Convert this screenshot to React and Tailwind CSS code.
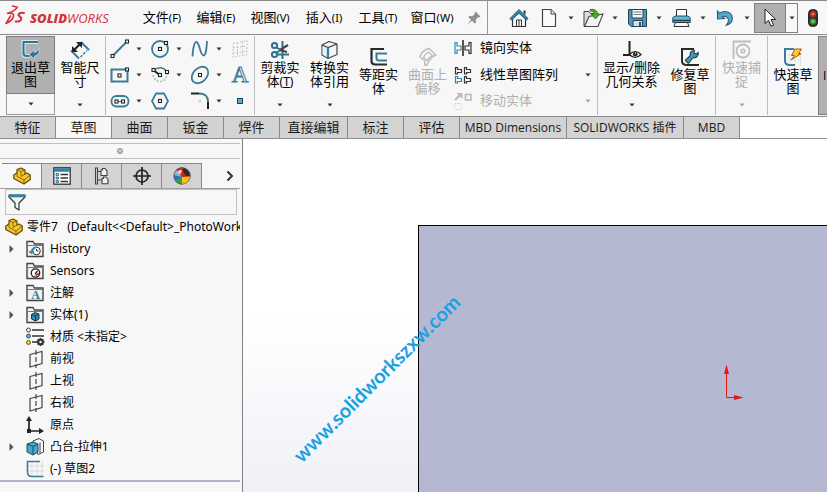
import { clsx } from 'clsx';

const menus = [
    { label: '文件', hotkey: 'F' },
    { label: '编辑', hotkey: 'E' },
    { label: '视图', hotkey: 'V' },
    { label: '插入', hotkey: 'I' },
    { label: '工具', hotkey: 'T' },
    { label: '窗口', hotkey: 'W' },
];

const commandTabs = [
    { label: '特征', width: 'w-14' },
    { label: '草图', width: 'w-14', active: true },
    { label: '曲面', width: 'w-14' },
    { label: '钣金', width: 'w-14' },
    { label: '焊件', width: 'w-14' },
    { label: '直接编辑', width: 'w-[68px]' },
    { label: '标注', width: 'w-14' },
    { label: '评估', width: 'w-14' },
    { label: 'MBD Dimensions', width: 'w-[107px]', latin: true },
    { label: 'SOLIDWORKS 插件', width: 'w-[117px]', latin: true },
    { label: 'MBD', width: 'w-14', latin: true },
];

const Svg = ({ w = 20, h = 20, children, className }) => (
    <svg width={w} height={h} viewBox={`0 0 ${w} ${h}`} fill="none" aria-hidden="true" className={clsx('shrink-0', className)}>
        {children}
    </svg>
);

const Caret = ({ muted }) => (
    <Svg w={6} h={4}>
        <path d="M0.5 0.5h5L3 3.5z" fill={muted ? '#a0a0a0' : '#333'} />
    </Svg>
);

// Small square handle used on most sketch entity icons
const Handle = ({ x, y }) => (
    <rect x={x - 1.5} y={y - 1.5} width="3" height="3" fill="#fff" stroke="#222" strokeWidth="1.1" />
);

/* ---------- Title bar icons ---------- */

const Logo = () => (
    <svg width="112" height="22" viewBox="0 0 112 22" role="img" aria-label="SOLIDWORKS" className="shrink-0">
        <g fill="none" stroke="#d2343a" strokeWidth="1.6" strokeLinecap="round" strokeLinejoin="round">
            <path d="M8.500 1L13.500 2.200Q11.500 5.500 5 8" />
            <path d="M3.500 8.200Q9.800 7.500 9.600 11Q8.500 16 2 18.500L6.500 11" />
            <path d="M20 8Q14 7.300 14.500 10.300L17.200 12.800Q17.800 17 11.500 16.500" strokeWidth="2" />
        </g>
        <text x="26" y="18" fill="#d2343a" fontFamily="'Open Sans', sans-serif" fontSize="13" fontStyle="italic">
            <tspan fontWeight="800">SOLID</tspan>
            <tspan fontWeight="400">WORKS</tspan>
        </text>
    </svg>
);

const PinIcon = () => (
    <Svg w={14} h={14}>
        <path d="M8.500 .5l5 5-1.200 1-1-.4-2.600 2.600.4 2.800-1.400 1-2.700-2.800L.5 13.500 4 8.800 1.400 6.200l1-1.300 2.900.4L8 2.700l-.4-1z" fill="#909090" />
    </Svg>
);

const HomeIcon = () => (
    <Svg w={20} h={20}>
        <path d="M3.500 10v8.500h13V10L10 4z" fill="#f8f8f8" stroke="#333" strokeWidth="1.200" />
        <path d="M7.500 18.500V12h5v6.500M10 12v6.500" stroke="#333" />
        <path d="M14.500 2.500h2V7l-2-1.800z" fill="#333" />
        <path d="M1 10.500L10 1.500l9 9-1.600 1.600L10 5.200l-7.400 6.900z" fill="#2f87ab" stroke="#174f69" strokeWidth=".9" />
    </Svg>
);

const NewIcon = () => (
    <Svg w={16} h={20}>
        <path d="M1.500 1.500h8.500l4.500 4.500v12.500h-13z" fill="#fafafa" stroke="#444" strokeWidth="1.200" />
        <path d="M10 1.500V6h4.500" fill="#ddd" stroke="#444" />
    </Svg>
);

const OpenIcon = () => (
    <Svg w={21} h={20}>
        <path d="M1 18V3.500h5l1.500 2H15V18z" fill="#ddd" stroke="#444" />
        <path d="M1.500 18.500L6 8.500l14-2.500-5 12.500z" fill="#f4f4f4" stroke="#444" strokeWidth="1.100" />
        <path d="M7 1.500c4.500-.8 7.500 1 7.500 4.500H17l-4.500 5L8 6h2.800C10.800 4 10 3 7 3.200z" fill="#4ea52c" stroke="#2a6f13" strokeWidth=".7" />
    </Svg>
);

const SaveIcon = () => (
    <Svg w={19} h={20}>
        <path d="M.5 1.500h18v17H3l-2.500-2.500z" fill="#5097b6" stroke="#1e4456" />
        <path d="M4 1.500h11v8.500H4z" fill="#f8f8f8" stroke="#1e4456" />
        <path d="M5.500 4h8M5.500 6.500h8" stroke="#777" />
        <path d="M5 12.500h9.500v6H5z" fill="#ddd" stroke="#1e4456" />
        <path d="M11 14h2v4.500h-2z" fill="#2c5567" />
    </Svg>
);

const PrintIcon = () => (
    <Svg w={19} h={20}>
        <path d="M4.500 9V1.500h10V9" fill="#fff" stroke="#333" />
        <path d="M.8 9.500L3.500 8h12l2.700 1.500v5H.8z" fill="#63b4d6" stroke="#1f5169" />
        <path d="M1 12.500h17" stroke="#174055" strokeWidth="1.400" />
        <path d="M3.500 14.500h12l1.500 4H2z" fill="#f5f5f5" stroke="#333" />
    </Svg>
);

const UndoIcon = () => (
    <Svg w={18} h={18}>
        <path d="M1.500 2l2 2.300C8.500 .8 16 3 16.300 9c.2 3.200-2.300 6-5.800 7.200 2.800-3.500 2.700-7.500-.8-8.700-1.300-.4-2.400-.2-3.400.2L8.500 9.500l-7 .5z" fill="#5aa6c6" stroke="#235f7c" strokeWidth="1.100" />
    </Svg>
);

const CursorIcon = () => (
    <Svg w={13} h={20}>
        <path d="M1 1v14.500l3.500-3.200 2.500 5.900 2.500-1.100-2.500-5.600h4.700z" fill="#fff" stroke="#222" />
    </Svg>
);

const TrafficLightIcon = () => (
    <Svg w={10} h={18}>
        <rect x=".5" y=".5" width="9" height="17" rx="4" fill="#333" stroke="#222" />
        <circle cx="5" cy="5" r="3" fill="#d22b20" />
        <circle cx="5" cy="12.500" r="3" fill="#3d9b2e" />
        <path d="M4 5h2M5 4v2M4 12.500h2M5 11.500v2" stroke="#fff" strokeOpacity=".5" />
    </Svg>
);

/* ---------- Ribbon icons ---------- */

const ExitSketchIcon = () => (
    <Svg w={20} h={20}>
        <path d="M17 2H2.500v11q0 3 3 3h3" stroke="#dcebf2" strokeWidth="4" />
        <path d="M17 2H2.500v11q0 3 3 3h3" stroke="#2b7593" strokeWidth="2" />
        <path d="M18 7.500c1 5-1 8-4.500 8.500v3L8 14.500l5.500-4.500v2.500c2.500-.3 3.800-2 4.500-5z" fill="#2b7593" stroke="#dcebf2" strokeWidth=".6" />
    </Svg>
);

const SmartDimensionIcon = () => (
    <Svg w={20} h={20}>
        <path d="M11 2l8 8M1 10.500l8 8" stroke="#3b7c97" strokeWidth="2" />
        <path d="M10.500 17l6.500-6.500" stroke="#3b7c97" strokeWidth="1.500" strokeDasharray="2.500 1.500" />
        <path d="M4 10l6-6" stroke="#222" strokeWidth="2.200" />
        <path d="M6 2h6v6zM2 6v6h6z" fill="#222" />
    </Svg>
);

const LineIcon = () => (
    <Svg>
        <path d="M2 17.500L17 2.500" stroke="#3b7c97" strokeWidth="2" />
        <Handle x={2.500} y={17} /><Handle x={17} y={2.500} />
    </Svg>
);

const CircleIcon = () => (
    <Svg>
        <circle cx="10" cy="10" r="8" stroke="#3b7c97" strokeWidth="1.800" />
        <Handle x={10} y={10} /><Handle x={16} y={4} />
    </Svg>
);

const SplineIcon = () => (
    <Svg>
        <path d="M2.500 17.500C3 9 4 3 6.500 3c3 0 3.500 13.500 7 13.500 2.500 0 3-6 3.500-14.500" stroke="#3b7c97" strokeWidth="1.800" />
    </Svg>
);

const PlaneGridIcon = () => (
    <Svg>
        <path d="M3 4.500l14-3v14l-14 3zM7.500 3.500v14M12.500 2.500v14M3 9l14-2M3 14l14-2" stroke="#c4c4c4" strokeDasharray="2 1.500" />
    </Svg>
);

const RectIcon = () => (
    <Svg>
        <rect x="1.500" y="4.500" width="16" height="12" stroke="#3b7c97" strokeWidth="2" />
        <Handle x={9.500} y={10.500} /><Handle x={17} y={4.500} />
    </Svg>
);

const ArcIcon = () => (
    <Svg>
        <path d="M3 10a7 7 0 0 0 14-1" stroke="#bbb" strokeWidth="1.600" strokeDasharray="2 1.500" />
        <path d="M4 5.500C8 1.500 14 2 16.500 6.500" stroke="#3b7c97" strokeWidth="1.600" />
        <path d="M3 5l7 5" stroke="#222" strokeWidth="2" />
        <Handle x={3.500} y={5} /><Handle x={10} y={10} /><Handle x={17} y={7} />
    </Svg>
);

const EllipseIcon = () => (
    <Svg>
        <ellipse cx="10" cy="10" rx="9.500" ry="6.800" transform="rotate(-45 10 10)" stroke="#3b7c97" strokeWidth="1.800" />
        <Handle x={10} y={10} />
    </Svg>
);

const SketchTextIcon = () => (
    <Svg className="overflow-visible">
        <text x="10" y="17" textAnchor="middle" fontFamily="'Liberation Serif', serif" fontSize="23" fill="#f4f8fa" stroke="#3b7c97" strokeWidth="1">A</text>
    </Svg>
);

const SlotIcon = () => (
    <Svg>
        <rect x="1.500" y="5" width="17" height="10.500" rx="5" stroke="#3b7c97" strokeWidth="1.800" />
        <path d="M8 10.500h4" stroke="#3b7c97" />
        <Handle x={6.500} y={10.500} /><Handle x={13} y={10.500} />
    </Svg>
);

const PolygonIcon = () => (
    <Svg>
        <path d="M6 2.500h8l4 7.500-4 7.500H6L2 10z" stroke="#3b7c97" strokeWidth="1.800" />
        <Handle x={10} y={10} />
    </Svg>
);

const FilletIcon = () => (
    <Svg>
        <path d="M1 2.500h8" stroke="#222" strokeWidth="2" />
        <path d="M9 2.500q9 0 9 8" stroke="#3b7c97" strokeWidth="1.800" />
        <path d="M18 10.500V18" stroke="#222" strokeWidth="2" />
        <path d="M8.500 8.500l3 3m0-3l-3 3" stroke="#ccc" />
    </Svg>
);

const PointIcon = () => (
    <Svg>
        <rect x="7.500" y="7.500" width="5" height="5" fill="#5ba7c6" stroke="#1d4c62" />
    </Svg>
);

const TrimIcon = () => (
    <Svg>
        <path d="M12.500 1v18M7 14.500h12" stroke="#2e718c" strokeWidth="2" />
        <circle cx="4.500" cy="5.500" r="2.600" stroke="#2e718c" strokeWidth="2" />
        <circle cx="4.500" cy="14.500" r="2.600" stroke="#2e718c" strokeWidth="2" />
        <path d="M6.500 7.500l4.500 2.500M6.500 12.500l4.500-2.500" stroke="#2e718c" strokeWidth="2" />
        <path d="M10 10l8-5M10 10l7 2" stroke="#444" strokeWidth="2.200" />
    </Svg>
);

const ConvertIcon = () => (
    <Svg>
        <path d="M2 5l7-3.500L17 4v10.500L8 18.500 2 15z" fill="#f5f5f5" stroke="#444" strokeWidth="1.200" strokeLinejoin="round" />
        <path d="M2.600 5.800L7.500 8v9.500l-4.900-3z" fill="#e4f0f5" />
        <path d="M2 5l6 2.500L17 4" stroke="#444" strokeWidth="1.200" />
        <path d="M8 7.500v11" stroke="#2c82a5" strokeWidth="2.200" />
    </Svg>
);

const OffsetIcon = () => (
    <Svg>
        <path d="M15 2H2.500v12q0 3.500 4 3.500H18" stroke="#2a2a2a" strokeWidth="2.200" />
        <path d="M18 6.500H7.500V11q0 2.500 2.500 2.500h8" stroke="#3b7c97" strokeWidth="2" />
    </Svg>
);

const SurfaceOffsetIcon = () => (
    <Svg>
        <path d="M2 10q1-5 7-8l2-.5L18 8q-5 2-7 6l-2 4-2 .5-.5-5z" stroke="#bcbcbc" strokeWidth="1.400" strokeLinejoin="round" />
        <path d="M5.500 10.500q1.500-3.500 5-5.500l4 3.500q-4 2-5.500 5z" stroke="#bcbcbc" strokeWidth="1.300" />
    </Svg>
);

const MirrorIcon = () => (
    <Svg w={18} h={16}>
        <path d="M1 2.500h2V6h4v4H3v3.500H1z" stroke="#3b8aa9" strokeWidth="1.200" />
        <path d="M17 2.500h-2V6h-4v4h4v3.500h2z" stroke="#333" strokeWidth="1.200" />
        <path d="M9 0v16" stroke="#111" strokeWidth="1.400" />
    </Svg>
);

const PatternIcon = () => (
    <Svg w={18} h={18}>
        <path d="M1.500 1.500h2v2h4v3h-4v1.500h-2zM10.500 1.500h2v2h4v3h-4v1.500h-2zM10.500 10.500h2v2h4v3h-4v1.500h-2z" stroke="#333" strokeWidth="1.200" />
        <path d="M1.500 10.500h2v2h4v3h-4v1.500h-2z" stroke="#2b8bad" strokeWidth="1.200" />
    </Svg>
);

const MoveIcon = () => (
    <Svg w={18} h={18}>
        <path d="M1 8l5-5" stroke="#bbb" strokeWidth="2.200" />
        <path d="M2.500 1h6v6z" fill="#bbb" />
        <rect x="11.500" y="2.500" width="5.500" height="5.500" stroke="#bbb" strokeWidth="1.600" />
        <rect x="1" y="11.500" width="6" height="6" stroke="#ccc" strokeDasharray="1 1" />
    </Svg>
);

const RelationsIcon = () => (
    <Svg>
        <path d="M7.500 1v14M1 15h8" stroke="#222" strokeWidth="2" />
        <path d="M7.500 14.500Q13 8.500 19 14.500q-6 6-11.500 0z" fill="#f8f8f8" stroke="#222" strokeWidth="1.200" />
        <circle cx="13.200" cy="14.200" r="2.400" fill="#333" />
        <path d="M13 13h1" stroke="#fff" />
    </Svg>
);

const RepairIcon = () => (
    <Svg>
        <path d="M14 2H2v12q0 4 5 4h12" stroke="#2a2a2a" strokeWidth="2" />
        <path d="M5.500 13.500l2.800 2.800q1.700-.5 2-2.300l3-3.500c3 .5 5.500-1.500 5-5l-2.300 1.800L14 6l.3-2.500c-3 0-4.800 2.200-4 5l-3 3q-1.800.2-1.800 2z" fill="#4d92b1" stroke="#17465c" strokeWidth="1.100" />
    </Svg>
);

const QuickSnapIcon = () => (
    <Svg>
        <path d="M1 1.500h18M1.500 1v18" stroke="#bcbcbc" strokeWidth="1.800" />
        <circle cx="11" cy="11" r="6.500" stroke="#bcbcbc" strokeWidth="1.800" />
        <circle cx="11" cy="11" r="1.800" stroke="#bcbcbc" strokeWidth="1.600" />
    </Svg>
);

const RapidSketchIcon = () => (
    <Svg>
        <path d="M7 7v11M12 7v11M4 8h15M4 13h15M17.500 7v12" stroke="#dbe2e5" />
        <path d="M11 2H2v12q0 4 5 4h5" stroke="#3b7c97" strokeWidth="2" />
        <path d="M12 2h6.500l-3 4.500H18L8 13l3.500-4.500H8.500z" fill="#f9cf2e" stroke="#b3500c" strokeWidth="1" />
    </Svg>
);

/* ---------- Feature tree icons ---------- */

const PartIcon = () => (
    <Svg w={18} h={18}>
        <path d="M.8 8L4 6V2.500L8 1l4 2v4l2-1 3.200 2v4.500L11 17 .8 11.500z" fill="#f6c72b" stroke="#5f4705" strokeWidth="1.200" strokeLinejoin="round" />
        <path d="M4 2.500l4 2L12 3M8 4.500v5l4-2.500M.8 8l3.200-2M4 6v3.500l7 3.500 6.200-5M11 13v4" stroke="#7c5c08" strokeWidth=".9" />
    </Svg>
);

const PropertyIcon = () => (
    <Svg w={18} h={18}>
        <rect x=".8" y=".8" width="16.400" height="16.400" fill="#fff" stroke="#333" strokeWidth="1.300" />
        <path d="M1 3h16" stroke="#2e83a7" strokeWidth="3.500" />
        <path d="M7.500 7.500H15M7.500 11H15M7.500 14.500H15" stroke="#333" strokeWidth="1.300" />
        <path d="M3 6.500h2.500v2H3zM3 10h2.500v2H3zM3 13.500h2.500v2H3z" fill="#8ac2da" stroke="#2b6b87" strokeWidth=".8" />
    </Svg>
);

const ConfigIcon = () => (
    <Svg w={18} h={18}>
        <path d="M2.500 1h2v16h-2zM4.500 4.500H9M4.500 13H9" stroke="#444" strokeWidth="1.100" />
        <path d="M8 3h1.500V1.500H12L14 4v4.500H8zM9 11.500h1.500V10H13l2 2.500v4.300H9z" fill="#f0f0f0" stroke="#444" strokeWidth="1.100" />
    </Svg>
);

const TargetIcon = () => (
    <Svg w={18} h={18}>
        <circle cx="9" cy="9" r="6" stroke="#222" strokeWidth="1.700" />
        <path d="M9 0v18M0 9h18" stroke="#222" strokeWidth="1.700" />
    </Svg>
);

const AppearanceIcon = () => (
    <Svg w={18} h={18}>
        <circle cx="9" cy="9" r="8.500" fill="#2c6fc4" />
        <path d="M9 10L.7 8A8.500 8.500 0 0 1 4 2.200z" fill="#7fbce4" />
        <path d="M9 10L3 3A8.500 8.500 0 0 1 11 .8z" fill="#d62b24" />
        <path d="M9 10L8 .6A8.500 8.500 0 0 1 17.300 10z" fill="#c9281f" />
        <path d="M11 1q6 2 6.300 7.500L13 9 9.500 3z" fill="#2b2b2b" />
        <path d="M9 10l8.400-.5A8.500 8.500 0 0 1 9 17.500z" fill="#f2c41c" />
        <path d="M9 10v7.500a8.500 8.500 0 0 1-7-4z" fill="#3b9e3a" />
        <path d="M4 5Q6 2.500 9 3L7.500 7.500z" fill="#fff" fillOpacity=".8" />
        <circle cx="9" cy="9" r="8.200" stroke="#555" strokeWidth=".6" />
    </Svg>
);

const FilterIcon = () => (
    <Svg w={18} h={18}>
        <path d="M1 2h16v2L11 10v7l-4-2.500V10L1 4z" fill="#eef3f5" stroke="#333" strokeWidth="1.200" strokeLinejoin="round" />
        <path d="M1.500 1.500h15v2.800h-15z" fill="#2f87ab" />
    </Svg>
);

const Folder = ({ children }) => (
    <Svg w={18} h={18} className="overflow-visible">
        <path d="M1 16.500V1.500h6L8.500 4H17v12.500z" fill="#f1f1f1" stroke="#444" strokeWidth="1.400" />
        <path d="M1.500 5.500h15" stroke="#777" />
        {children}
    </Svg>
);

const HistoryIcon = () => (
    <Folder>
        <circle cx="10.500" cy="11" r="3.800" fill="#fff" stroke="#333" />
        <path d="M10.500 9v2h2" stroke="#333" />
        <path d="M3 11.500h4.500L5.300 14zM5.300 12C5 8.500 8 6.500 11 7" fill="#3489ad" stroke="#3489ad" strokeWidth=".8" />
    </Folder>
);

const SensorsIcon = () => (
    <Folder>
        <circle cx="9.500" cy="11" r="4.200" fill="#fff" stroke="#222" strokeWidth="1.300" />
        <path d="M9 12l2.500-3" stroke="#222" strokeWidth="1.200" />
        <path d="M9.500 13.500l3.500-2" stroke="#d62b24" strokeWidth="2" />
    </Folder>
);

const NotesIcon = () => (
    <Folder>
        <text x="9.500" y="15" textAnchor="middle" fontFamily="'Liberation Serif', serif" fontWeight="700" fontSize="12" fill="#2b7ba0">A</text>
    </Folder>
);

const BodiesIcon = () => (
    <Folder>
        <path d="M5.500 8.500l3.500-2 4 1.500v5L9.500 15l-4-2z" fill="#2f87ab" stroke="#123f54" />
        <path d="M5.500 8.500l4 1.500 3.500-2M9.500 10v5" stroke="#123f54" />
    </Folder>
);

const MaterialIcon = () => (
    <Svg w={20} h={20}>
        <path d="M6 3h12M6 9h12M6 15h5" stroke="#333" strokeWidth="1.700" />
        <circle cx="2.500" cy="3" r="2" fill="#eee" stroke="#444" />
        <circle cx="2.500" cy="9" r="2" fill="#6bb5d5" stroke="#1f5169" />
        <circle cx="2.500" cy="15.500" r="2" fill="#f6c72b" stroke="#7c5c08" />
        <circle cx="14.500" cy="15" r="2.300" stroke="#333" strokeWidth="2.200" />
        <path d="M14.500 11v2M14.500 17v2M10.500 15h2M16.500 15h2M11.700 12.200l1.300 1.300M16 16.500l1.300 1.300M17.300 12.200L16 13.500M13 16.500l-1.300 1.300" stroke="#333" strokeWidth="1.300" />
    </Svg>
);

const PlaneIcon = () => (
    <Svg w={18} h={18}>
        <path d="M4 4.500l12-3v12l-12 3.500z" stroke="#444" strokeWidth="1.200" />
        <path d="M10 0v18" stroke="#444" strokeWidth="1.200" strokeDasharray="5 2" />
    </Svg>
);

const OriginIcon = () => (
    <Svg w={18} h={18}>
        <path d="M3 2v13h12" stroke="#222" strokeWidth="1.700" />
        <path d="M0 5l3-5 3 5zM13 12l5 3-5 3zM1 13h4v4H1z" fill="#222" />
    </Svg>
);

const ExtrudeIcon = () => (
    <Svg w={18} h={18}>
        <path d="M7 3l6-2.500L17.500 3v11L12 16.500z" fill="#f5f5f5" stroke="#444" />
        <path d="M14 4.500V15" stroke="#444" />
        <path d="M1 6l6-2 5 2v8l-5 3-6-3z" fill="#4fa5c9" stroke="#174f69" strokeLinejoin="round" />
        <path d="M1 6l6 2.500L12 6M7 8.500V17" stroke="#174f69" />
    </Svg>
);

const SketchIcon = () => (
    <Svg w={18} h={18}>
        <path d="M6 1v16M11 1v16M16 1v16M2 6h16M2 11h16" stroke="#d6dbde" />
        <path d="M14 1.500H1.500V12q0 4.500 4.500 4.500h11.500" stroke="#3b7c97" strokeWidth="1.600" />
    </Svg>
);

const treeItems = [
    { label: 'History', icon: HistoryIcon, expandable: true },
    { label: 'Sensors', icon: SensorsIcon },
    { label: '注解', icon: NotesIcon, expandable: true },
    { label: '实体(1)', icon: BodiesIcon, expandable: true },
    { label: '材质 <未指定>', icon: MaterialIcon },
    { label: '前视', icon: PlaneIcon },
    { label: '上视', icon: PlaneIcon },
    { label: '右视', icon: PlaneIcon },
    { label: '原点', icon: OriginIcon },
    { label: '凸台-拉伸1', icon: ExtrudeIcon, expandable: true },
    { label: '(-) 草图2', icon: SketchIcon },
];

const sketchTools = [
    [
        { name: '直线', icon: LineIcon, menu: true },
        { name: '圆', icon: CircleIcon, menu: true },
        { name: '样条曲线', icon: SplineIcon, menu: true },
        { name: '基准面', icon: PlaneGridIcon, disabled: true },
    ],
    [
        { name: '矩形', icon: RectIcon, menu: true },
        { name: '圆弧', icon: ArcIcon, menu: true },
        { name: '椭圆', icon: EllipseIcon, menu: true },
        { name: '文字', icon: SketchTextIcon },
    ],
    [
        { name: '槽口', icon: SlotIcon, menu: true },
        { name: '多边形', icon: PolygonIcon },
        { name: '圆角', icon: FilletIcon, menu: true },
        { name: '点', icon: PointIcon },
    ],
];

const panelTabs = [
    { name: 'FeatureManager', icon: PartIcon, active: true },
    { name: 'PropertyManager', icon: PropertyIcon },
    { name: 'ConfigurationManager', icon: ConfigIcon },
    { name: 'DimXpertManager', icon: TargetIcon },
    { name: 'DisplayManager', icon: AppearanceIcon },
];

const Divider = () => <div className="w-px shrink-0 self-stretch bg-[#bcbcbc]" />;

function BigTool({ icon: Icon, lines, width, low, menu, disabled, pressed, hotkey }) {
    return (
        <div className={clsx('flex shrink-0 flex-col', width, disabled ? 'text-[#b0b0b0]' : 'text-black')}>
            <button
                disabled={disabled}
                className={clsx(
                    'flex h-[58px] flex-col items-center border',
                    low ? 'pt-2.5' : 'pt-[3px]',
                    pressed ? 'border-[#7c7c7c] bg-[#b0b0b0]' : 'border-transparent'
                )}
            >
                <Icon />
                <span className="text-center text-[13px] leading-[14px] whitespace-nowrap">
                    {lines[0]}<br />{lines[1]}
                    {hotkey && <span className="text-xs leading-[14px]">(<u>{hotkey}</u>)</span>}
                </span>
            </button>
            {menu && (
                <button
                    disabled={disabled}
                    aria-label={`${lines.join('')} 选项`}
                    className={clsx('flex flex-1 items-center justify-center border', pressed ? 'border-t-0 border-[#9a9a9a]' : 'border-transparent')}
                >
                    <Caret muted={disabled} />
                </button>
            )}
        </div>
    );
}

function QuickButton({ name, icon: Icon, menu = true }) {
    return (
        <div className="flex h-full shrink-0 items-center">
            <button aria-label={name} className="flex w-[22px] justify-center"><Icon /></button>
            {menu && (
                <button aria-label={`${name} 选项`} className="flex h-full w-[22px] items-center justify-center"><Caret /></button>
            )}
        </div>
    );
}

function TitleBar() {
    return (
        <header className="flex h-[35px] shrink-0 items-center overflow-hidden border-t border-b border-[#8a8a8a] bg-[#f7f7f7]">
            <div className="w-[135px] shrink-0 pb-1 pl-1"><Logo /></div>
            <nav className="flex shrink-0 items-center text-[13px]">
                {menus.map((m) => (
                    <button key={m.label} className="w-[54px] text-center whitespace-nowrap">
                        {m.label}<span className="text-[11px]">({m.hotkey})</span>
                    </button>
                ))}
            </nav>
            <button aria-label="固定菜单" className="ml-2 shrink-0"><PinIcon /></button>
            <div className="ml-1.5 h-full w-px shrink-0 bg-[#9a9a9a]" />
            <div className="flex h-full flex-1 items-center pl-5">
                <QuickButton name="主页" icon={HomeIcon} menu={false} />
                <div className="flex h-full items-center pl-2">
                    <QuickButton name="新建" icon={NewIcon} />
                    <QuickButton name="打开" icon={OpenIcon} />
                    <QuickButton name="保存" icon={SaveIcon} />
                    <QuickButton name="打印" icon={PrintIcon} />
                    <QuickButton name="撤销" icon={UndoIcon} />
                </div>
                <div className="-ml-1 flex h-[30px] shrink-0 border border-[#808080]">
                    <button aria-label="选择" className="flex w-[30px] items-center justify-center bg-[#b0b0b0]"><CursorIcon /></button>
                    <button aria-label="选择 选项" className="flex w-3 items-center justify-center border-l border-[#808080]"><Caret /></button>
                </div>
                <button aria-label="重建模型" className="ml-2.5 shrink-0"><TrafficLightIcon /></button>
            </div>
        </header>
    );
}

function Ribbon() {
    return (
        <section aria-label="草图工具" className="flex h-[82px] shrink-0 overflow-hidden border-b border-[#8a8a8a] bg-[#f7f7f7] py-px pl-1.5">
            <BigTool icon={ExitSketchIcon} lines={['退出草', '图']} width="w-[49px]" menu pressed />
            <BigTool icon={SmartDimensionIcon} lines={['智能尺', '寸']} width="w-[50px]" menu />
            <Divider />
            <div className="flex w-[148px] shrink-0 flex-col justify-between pt-[3px] pb-1 pl-1">
                {sketchTools.map((row, i) => (
                    <div key={i} className="flex">
                        {row.map(({ name, icon: Icon, menu, disabled }) => (
                            <div key={name} className="flex w-10 shrink-0 items-center">
                                <button aria-label={name} disabled={disabled}><Icon /></button>
                                {menu && <button aria-label={`${name} 选项`} className="px-1.5 py-2"><Caret /></button>}
                            </div>
                        ))}
                    </div>
                ))}
            </div>
            <Divider />
            <BigTool icon={TrimIcon} lines={['剪裁实', '体']} hotkey="T" width="w-[50px]" menu />
            <BigTool icon={ConvertIcon} lines={['转换实', '体引用']} width="w-[49px]" menu />
            <BigTool icon={OffsetIcon} lines={['等距实', '体']} width="w-[49px]" low />
            <BigTool icon={SurfaceOffsetIcon} lines={['曲面上', '偏移']} width="w-[49px]" low disabled />
            <div className="flex w-[145px] shrink-0 flex-col justify-between pb-0.5 pl-0.5 text-[13px]">
                <button className="flex h-6 items-center gap-2"><MirrorIcon />镜向实体</button>
                <div className="flex h-6 items-center justify-between pr-1.5">
                    <button className="flex items-center gap-2"><PatternIcon />线性草图阵列</button>
                    <button aria-label="阵列选项"><Caret /></button>
                </div>
                <div className="flex h-6 items-center justify-between pr-1.5 text-[#b0b0b0]">
                    <button disabled className="flex items-center gap-2"><MoveIcon />移动实体</button>
                    <button disabled aria-label="移动选项"><Caret muted /></button>
                </div>
            </div>
            <Divider />
            <BigTool icon={RelationsIcon} lines={['显示/删除', '几何关系']} width="w-[67px]" menu />
            <BigTool icon={RepairIcon} lines={['修复草', '图']} width="w-[50px]" low />
            <Divider />
            <BigTool icon={QuickSnapIcon} lines={['快速捕', '捉']} width="w-[51px]" menu disabled />
            <Divider />
            <BigTool icon={RapidSketchIcon} lines={['快速草', '图']} width="w-[50px]" low />
            <button aria-label="Instant2D" className="flex-1 overflow-hidden border border-r-0 border-[#7c7c7c] bg-[#b0b0b0] pl-1 text-left font-['Open_Sans'] text-xs">I</button>
        </section>
    );
}

function CommandTabs() {
    return (
        <div role="tablist" className="flex h-[22px] shrink-0 overflow-hidden border-b border-[#8a8c8f] bg-white">
            {commandTabs.map((tab) => (
                <button
                    key={tab.label}
                    role="tab"
                    aria-selected={!!tab.active}
                    className={clsx(
                        'shrink-0 border-r border-[#8a8a8a] text-center whitespace-nowrap text-[#1a1a1a]',
                        tab.latin ? "font-['Open_Sans','Noto_Sans_CJK_SC',sans-serif] text-xs" : 'text-[13px]',
                        tab.width,
                        tab.active ? 'bg-[#f7f7f7]' : 'bg-[#d3d3d3]'
                    )}
                >
                    {tab.label}
                </button>
            ))}
        </div>
    );
}

function FeaturePanel() {
    return (
        <aside className="flex w-[243px] shrink-0 flex-col border-r border-[#808080] bg-[#f7f7f7] pr-0.5">
            <div className="mt-1 flex h-4 shrink-0 items-center justify-center border-t border-b border-[#c0c0c0]">
                <div className="size-1.5 rounded-full border border-[#8a8a8a] bg-[#c8c8c8]" />
            </div>
            <div className="mt-1 flex h-[26px] shrink-0 items-center border-b border-[#a0a0a0] pl-0.5">
                <div role="tablist" className="flex h-full border-t border-[#8a8a8a]">
                    {panelTabs.map(({ name, icon: Icon, active }) => (
                        <button
                            key={name}
                            role="tab"
                            aria-label={name}
                            aria-selected={!!active}
                            className={clsx('flex w-10 items-center justify-center border-r border-[#8a8a8a]', active ? 'bg-[#f7f7f7]' : 'bg-[#d3d3d3]')}
                        >
                            <Icon />
                        </button>
                    ))}
                </div>
                <button aria-label="更多标签" className="ml-auto pr-1.5">
                    <Svg w={8} h={12}><path d="M1.500 1.500L6 6l-4.500 4.500" stroke="#333" strokeWidth="2" /></Svg>
                </button>
            </div>
            <div className="mr-[3px] ml-[5px] flex h-[26px] shrink-0 items-center border border-[#c0c0c0] pl-0.5">
                <FilterIcon />
                <input aria-label="筛选" className="min-w-0 flex-1 bg-transparent px-1 text-[13px] outline-none" />
            </div>
            <div className="mt-px flex h-[22px] shrink-0 items-center gap-1 overflow-hidden pl-[5px] text-xs whitespace-pre">
                <PartIcon />
                <span>{'零件7   (Default<<Default>_PhotoWorks>)'}</span>
            </div>
            <ul className="border-b-2 border-[#b0b4c8] text-xs">
                {treeItems.map(({ label, icon: Icon, expandable }) => (
                    <li key={label} className="flex h-[22px] items-center pl-2">
                        <span className="w-[18px] shrink-0">
                            {expandable && (
                                <button aria-label={`展开 ${label}`} className="block">
                                    <Svg w={6} h={8}><path d="M1.500 0v8L5.500 4z" fill="#555" /></Svg>
                                </button>
                            )}
                        </span>
                        <span className="flex w-6 shrink-0"><Icon /></span>
                        {label}
                    </li>
                ))}
            </ul>
        </aside>
    );
}

function Viewport() {
    return (
        <main className="relative flex flex-1 overflow-hidden bg-linear-to-b from-white from-50% to-[#eff1f6] pt-[86px] pl-[175px]">
            <div className="flex-1 border-t border-l border-black bg-[#b4b9d1]" />
            <svg width="24" height="40" viewBox="0 0 24 40" fill="none" aria-hidden="true" className="absolute top-[225px] left-[480px]">
                <path d="M3.500 10v23.500H14" stroke="#e8141c" />
                <path d="M1 10l2.500-9.500L6 10zM11 31l9.500 2.500L11 36z" fill="#e8141c" />
            </svg>
            <p className="absolute top-[227px] left-[13px] w-60 -rotate-45 text-center font-[Lato] text-xl leading-6 font-bold whitespace-nowrap text-[#1ba1e2]">
                www.solidworkszxw.com
            </p>
        </main>
    );
}

export default function App() {
    return (
        <div className="flex h-screen flex-col overflow-hidden bg-white font-['Noto_Sans','Noto_Sans_CJK_SC',sans-serif] text-black">
            <TitleBar />
            <Ribbon />
            <CommandTabs />
            <div className="flex min-h-0 flex-1">
                <FeaturePanel />
                <Viewport />
            </div>
        </div>
    );
}
